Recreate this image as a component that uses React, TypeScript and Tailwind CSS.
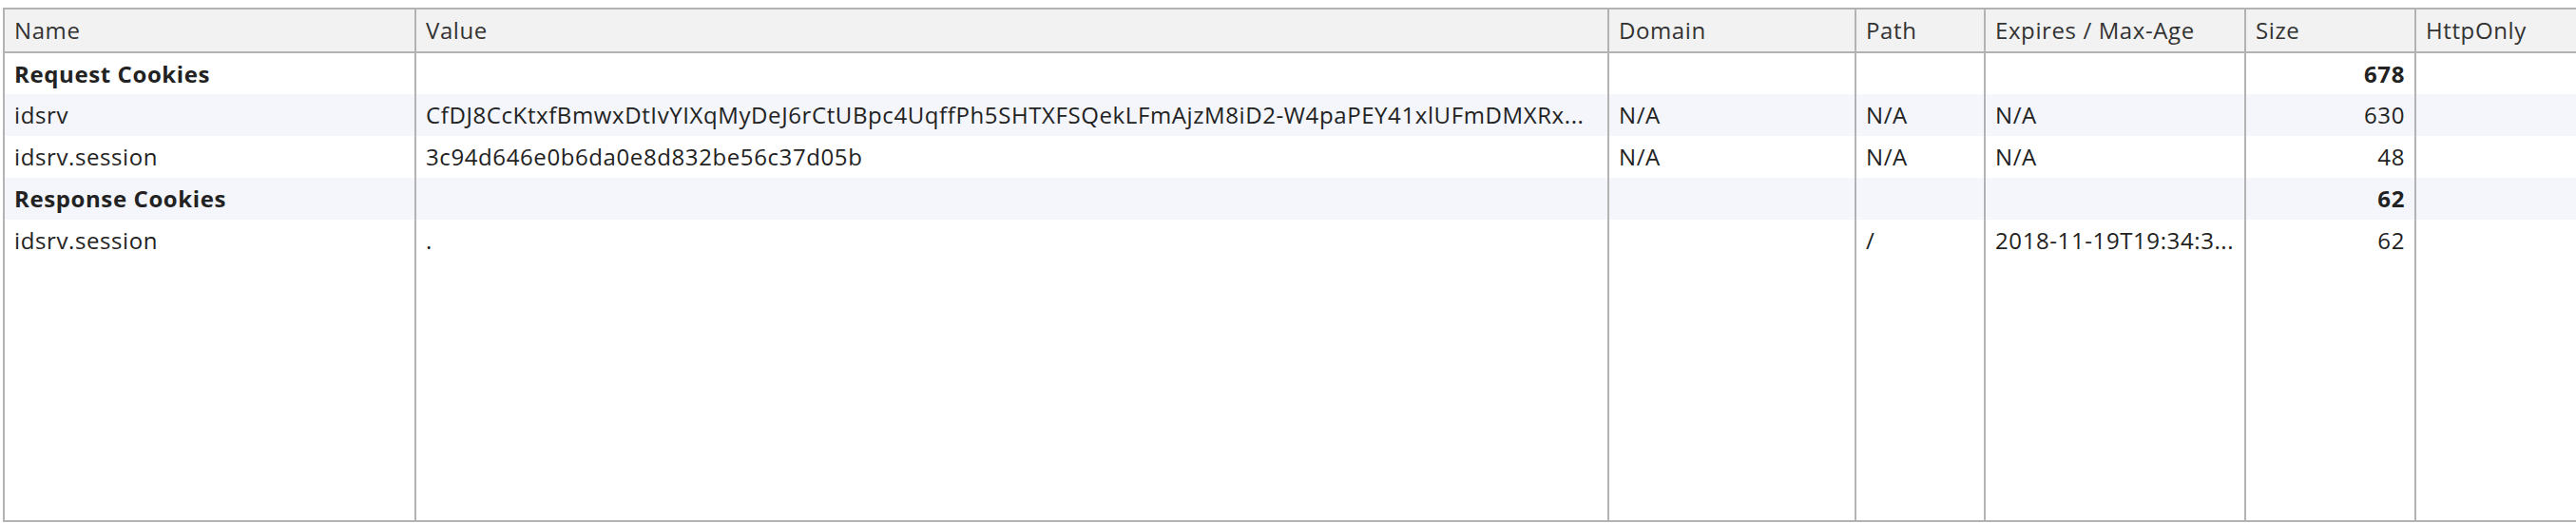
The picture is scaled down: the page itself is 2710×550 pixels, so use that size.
import React from "react";

type Row = {
  name: string;
  value: string;
  domain: string;
  path: string;
  expires: string;
  size: string;
  group?: boolean;
};

// values are shown already cut, the way the devtools grid shows them
const rows: Row[] = [
  { name: "Request Cookies", value: "", domain: "", path: "", expires: "", size: "678", group: true },
  {
    name: "idsrv",
    value: "CfDJ8CcKtxfBmwxDtIvYIXqMyDeJ6rCtUBpc4UqffPh5SHTXFSQekLFmAjzM8iD2-W4paPEY41xlUFmDMXRx...",
    domain: "N/A",
    path: "N/A",
    expires: "N/A",
    size: "630",
  },
  { name: "idsrv.session", value: "3c94d646e0b6da0e8d832be56c37d05b", domain: "N/A", path: "N/A", expires: "N/A", size: "48" },
  { name: "Response Cookies", value: "", domain: "", path: "", expires: "", size: "62", group: true },
  { name: "idsrv.session", value: ".", domain: "", path: "/", expires: "2018-11-19T19:34:3...", size: "62" },
];

const cell = "border-r-2 border-[#b3b3b3] px-[10px] overflow-hidden whitespace-nowrap";

export default function App() {
  return (
    <div className="w-[2710px] h-[550px] overflow-hidden bg-white pl-[3px] pt-[8px]">
      <div
        className="h-[541px] w-[2740px] border-l-2 border-t-2 border-b-2 border-[#b3b3b3] text-[24px] tracking-[0.6px] text-[#222]"
        style={{ fontFamily: '"Open Sans", "Noto Sans", sans-serif' }}
      >
        <table className="table-fixed border-collapse w-full h-full">
          <colgroup>
            <col className="w-[432px]" />
            <col className="w-[1255px]" />
            <col className="w-[260px]" />
            <col className="w-[136px]" />
            <col className="w-[274px]" />
            <col className="w-[179px]" />
            <col />
          </colgroup>
          <thead>
            <tr className="h-[45px] bg-[#f2f2f2] text-[#333] border-b-2 border-[#b3b3b3]">
              <th className={`${cell} text-left font-normal`}>Name</th>
              <th className={`${cell} text-left font-normal`}>Value</th>
              <th className={`${cell} text-left font-normal`}>Domain</th>
              <th className={`${cell} text-left font-normal`}>Path</th>
              <th className={`${cell} text-left font-normal`}>Expires / Max-Age</th>
              <th className={`${cell} text-left font-normal`}>Size</th>
              <th className={`${cell} text-left font-normal`}>HttpOnly</th>
            </tr>
          </thead>
          <tbody>
            {rows.map((r, i) => (
              <tr key={i} className={`h-[44px] ${i % 2 === 1 ? "bg-[#f4f6fb]" : "bg-white"} ${r.group ? "font-bold" : ""}`}>
                <td className={cell}>{r.name}</td>
                <td className={cell}>{r.value}</td>
                <td className={cell}>{r.domain}</td>
                <td className={cell}>{r.path}</td>
                <td className={cell}>{r.expires}</td>
                <td className={`${cell} text-right`}>{r.size}</td>
                <td className={cell}></td>
              </tr>
            ))}
            <tr>
              <td className={cell}></td>
              <td className={cell}></td>
              <td className={cell}></td>
              <td className={cell}></td>
              <td className={cell}></td>
              <td className={cell}></td>
              <td className={cell}></td>
            </tr>
          </tbody>
        </table>
      </div>
    </div>
  );
}
